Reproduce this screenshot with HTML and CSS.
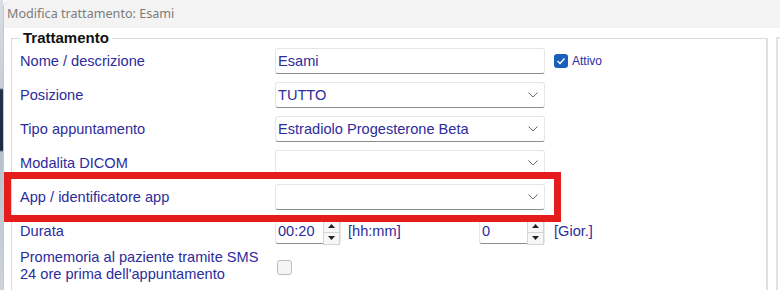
FILE: index.html
```html
<!DOCTYPE html>
<html lang="it">
<head>
    <meta charset="UTF-8">
    <title>Modifica trattamento: Esami</title>
    <link rel="stylesheet" href="styles.css">
</head>
<body>
    <div class="desk">
        <div class="strip"></div>
        <div class="window">
            <div class="titlebar">Modifica trattamento: Esami</div>
            <div class="content">
                <fieldset class="group">
                    <legend>Trattamento</legend>
                    <div class="row">
                        <span class="label">Nome / descrizione</span>
                        <div class="field"><span>Esami</span></div>
                        <span class="check"><span class="box on"><svg width="10" height="8" viewBox="0 0 10 8"><polyline points="1.5,4 4,6.5 8.5,1.5" fill="none" stroke="#fff" stroke-width="1.4"/></svg></span>Attivo</span>
                    </div>
                    <div class="row">
                        <span class="label">Posizione</span>
                        <div class="field select"><span>TUTTO</span><svg class="chev" width="10" height="6" viewBox="0 0 10 6"><polyline points="0.5,0.5 5,5 9.5,0.5" fill="none" stroke="#6b6b6b" stroke-width="1"/></svg></div>
                    </div>
                    <div class="row">
                        <span class="label">Tipo appuntamento</span>
                        <div class="field select"><span>Estradiolo Progesterone Beta</span><svg class="chev" width="10" height="6" viewBox="0 0 10 6"><polyline points="0.5,0.5 5,5 9.5,0.5" fill="none" stroke="#6b6b6b" stroke-width="1"/></svg></div>
                    </div>
                    <div class="row">
                        <span class="label">Modalita DICOM</span>
                        <div class="field select"><span></span><svg class="chev" width="10" height="6" viewBox="0 0 10 6"><polyline points="0.5,0.5 5,5 9.5,0.5" fill="none" stroke="#6b6b6b" stroke-width="1"/></svg></div>
                    </div>
                    <div class="row">
                        <span class="label">App / identificatore app</span>
                        <div class="field select"><span></span><svg class="chev" width="10" height="6" viewBox="0 0 10 6"><polyline points="0.5,0.5 5,5 9.5,0.5" fill="none" stroke="#6b6b6b" stroke-width="1"/></svg></div>
                    </div>
                    <div class="row">
                        <span class="label">Durata</span>
                        <div class="pair">
                            <div class="field spin"><span>00:20</span>
                                <div class="spinbtns">
                                    <span class="sb"><svg width="7" height="4" viewBox="0 0 7 4"><polygon points="0,4 3.5,0 7,4" fill="#222"/></svg></span>
                                    <span class="sb"><svg width="7" height="4" viewBox="0 0 7 4"><polygon points="0,0 3.5,4 7,0" fill="#222"/></svg></span>
                                </div>
                            </div>
                            <span class="unit">[hh:mm]</span>
                            <div class="field spin right"><span>0</span>
                                <div class="spinbtns">
                                    <span class="sb"><svg width="7" height="4" viewBox="0 0 7 4"><polygon points="0,4 3.5,0 7,4" fill="#222"/></svg></span>
                                    <span class="sb"><svg width="7" height="4" viewBox="0 0 7 4"><polygon points="0,0 3.5,4 7,0" fill="#222"/></svg></span>
                                </div>
                            </div>
                        </div>
                        <span class="unit">[Gior.]</span>
                    </div>
                    <div class="row tall">
                        <span class="label">Promemoria al paziente tramite SMS<br>24 ore prima dell'appuntamento</span>
                        <div><span class="box off"></span></div>
                    </div>
                </fieldset>
                <div class="nextpanel"></div>
                <div class="highlight"></div>
            </div>
        </div>
    </div>
</body>
</html>
```

FILE: styles.css
```css
body {
    margin: 0;
    width: 780px;
    height: 290px;
    overflow: hidden;
    background-color: #fff;
    font-family: "Liberation Sans", Arial, sans-serif;
}
.desk {
    display: flex;
    height: 290px;
}
.strip {
    width: 3px;
    flex-shrink: 0;
    background: linear-gradient(#d9dee4 0, #c9ced6 88px, #24324c 90px, #1d2a44 150px, #b8c0ca 152px, #cfd4da 290px);
}
.window {
    flex: 1;
    display: flex;
    flex-direction: column;
    border-left: 1px solid #c8c8c8;
    border-top-left-radius: 7px;
    overflow: hidden;
}
.titlebar {
    height: 28px;
    line-height: 28px;
    padding-left: 3px;
    background-color: #f3f3f3;
    color: #7c7c7c;
    font-family: "Noto Sans", sans-serif;
    font-size: 12.6px;
    flex-shrink: 0;
}
.content {
    flex: 1;
    position: relative;
    display: flex;
    align-items: flex-start;
    background-color: #fff;
}
.group {
    flex-shrink: 0;
    width: 757px;
    margin: 4px 0 0 7px;
    padding: 0 0 0 8px;
    border: 1px solid #dadada;
    border-right: 2px solid #e0e0e0;
    box-sizing: border-box;
    height: 300px;
}
.group legend {
    margin-left: 0;
    padding: 0 3px;
    font-size: 15px;
    font-weight: bold;
    line-height: 12px;
    color: #111;
}
.row {
    display: grid;
    grid-template-columns: 246px 270px auto;
    column-gap: 9px;
    align-items: center;
    height: 34px;
}
.label {
    color: #2c2c9c;
    font-size: 14.6px;
}
.row.tall {
    height: 38px;
    align-items: start;
}
.row.tall .label {
    line-height: 17px;
    padding-top: 1px;
}
.row.tall .box {
    margin-top: 12px;
    margin-left: 2px;
}
.field {
    display: flex;
    align-items: center;
    justify-content: space-between;
    height: 26px;
    box-sizing: border-box;
    padding-left: 2px;
    background-color: #fff;
    border: 1px solid #e6e6e6;
    border-bottom: 1px solid #8e8e8e;
    border-radius: 3px;
    color: #2c2c9c;
    font-size: 14.6px;
}
.chev {
    margin-right: 6px;
}
.check {
    display: flex;
    align-items: center;
    gap: 4px;
    color: #2c2c9c;
    font-size: 12px;
}
.box {
    display: inline-flex;
    align-items: center;
    justify-content: center;
    width: 14px;
    height: 14px;
    box-sizing: border-box;
    border-radius: 3px;
}
.box.on {
    background-color: #1b5fbd;
}
.box.off {
    width: 15px;
    height: 15px;
    background-color: #f5f5f5;
    border: 1px solid #bdbdbd;
}
.pair {
    display: flex;
    align-items: center;
    gap: 7px;
}
.spin {
    width: 66px;
    padding-right: 0;
}
.spin.right {
    margin-left: auto;
}
.spinbtns {
    display: flex;
    flex-direction: column;
    width: 17px;
    height: 25px;
    align-self: flex-start;
}
.sb {
    flex: 1;
    display: flex;
    align-items: center;
    justify-content: center;
    border: 1px solid #d4d4d4;
    background-color: #f7f7f7;
    margin: 0 0 -1px 0;
}
.unit {
    color: #2c2c9c;
    font-size: 14.6px;
}
.nextpanel {
    flex-shrink: 0;
    margin: 9px 0 0 8px;
    width: 20px;
    height: 300px;
    border-left: 2px solid #e2e2e2;
    border-top: 2px solid #e2e2e2;
}
.highlight {
    position: absolute;
    left: 0;
    top: 144px;
    width: 557px;
    height: 50px;
    box-sizing: border-box;
    border: 7px solid #e41c1c;
}
```
